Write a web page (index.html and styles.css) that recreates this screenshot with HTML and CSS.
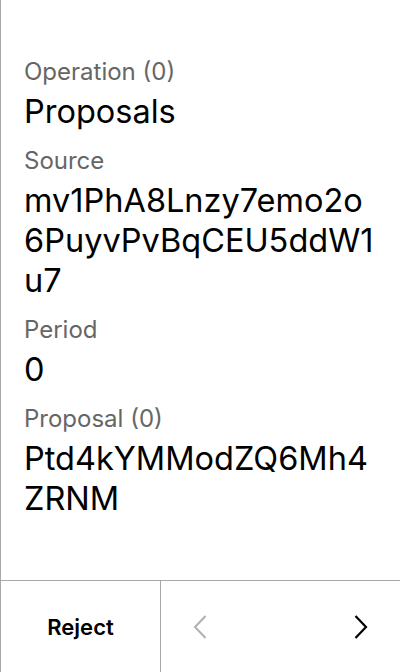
FILE: index.html
```html
<!DOCTYPE html>
<html>
<head>
<meta charset="utf-8">
<link rel="stylesheet" href="styles.css">
</head>
<body>
<div class="screen">
  <div class="content">
    <div class="label">Operation (0)</div>
    <div class="value">Proposals</div>
    <div class="label">Source</div>
    <div class="value">mv1PhA8Lnzy7emo2o6PuyvPvBqCEU5ddW1u7</div>
    <div class="label">Period</div>
    <div class="value">0</div>
    <div class="label">Proposal (0)</div>
    <div class="value">Ptd4kYMModZQ6Mh4ZRNM</div>
  </div>
  <div class="footer">
    <div class="reject">Reject</div>
    <div class="nav">
      <svg class="chev chev-off" width="14" height="24" viewBox="0 0 14 24"><path d="M12.5 1 L2 12 L12.5 23" fill="none" stroke="currentColor" stroke-width="2"/></svg>
      <svg class="chev" width="14" height="24" viewBox="0 0 14 24"><path d="M1.5 1 L12 12 L1.5 23" fill="none" stroke="currentColor" stroke-width="2.2"/></svg>
    </div>
  </div>
</div>
</body>
</html>
```

FILE: styles.css
```css
html, body {
  margin: 0;
  padding: 0;
  background: #fff;
}
body {
  font-family: Inter, "Noto Sans", sans-serif;
  color: #000;
}
.screen {
  width: 400px;
  height: 672px;
  box-sizing: border-box;
  border-left: 1px solid #a8a8a8;
  display: flex;
  flex-direction: column;
}
.content {
  flex: 1;
  padding: 57px 24px 0 23px;
  display: flex;
  flex-direction: column;
}
.label {
  font-size: 24px;
  line-height: 29px;
  color: #666;
  margin-top: 14px;
}
.label:first-child {
  margin-top: 0;
}
.value {
  font-size: 32.5px;
  line-height: 40px;
  margin-top: 6px;
  word-break: break-all;
}
.footer {
  height: 92px;
  box-sizing: border-box;
  border-top: 1px solid #a8a8a8;
  display: flex;
}
.reject {
  width: 159px;
  border-right: 1px solid #a8a8a8;
  display: flex;
  align-items: center;
  justify-content: center;
  font-size: 22px;
  font-weight: 600;
}
.nav {
  flex: 1;
  display: flex;
  align-items: center;
  justify-content: space-between;
  padding: 0 32px;
}
.chev {
  color: #000;
  display: block;
}
.chev-off {
  color: #b0b0b0;
}
```
